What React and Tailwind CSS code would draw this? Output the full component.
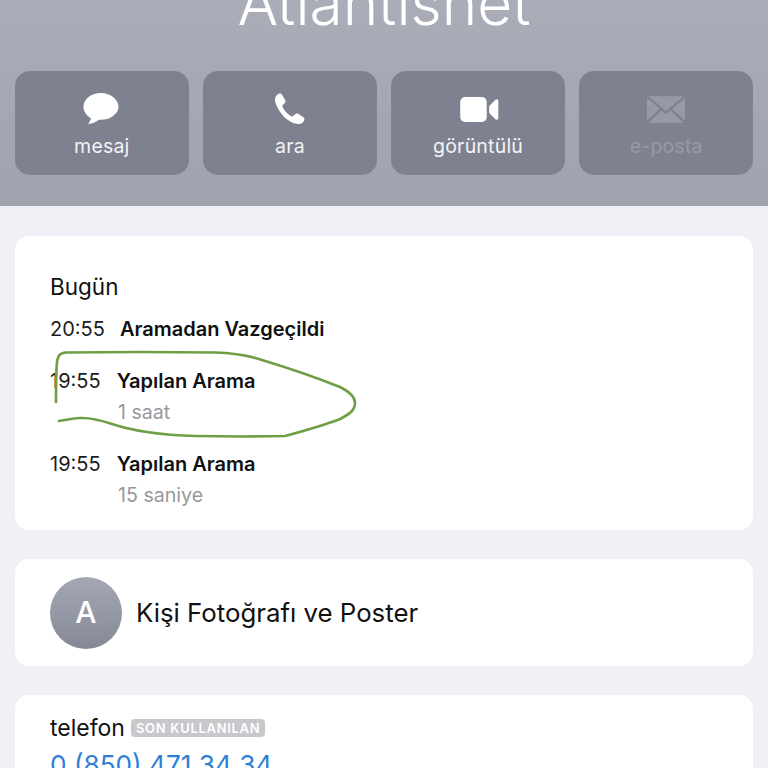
const font = "font-['Inter','Noto_Sans',sans-serif]";

function ActionButton({ icon, label, muted, iconClass }) {
    return (
        <div className="h-[104px] rounded-[15px] bg-[#7e8290] flex flex-col items-center">
            <div className={`h-[34px] w-[40px] mt-[21px] flex items-center justify-center ${iconClass || ""}`}>{icon}</div>
            <span className={`mt-[8px] text-[19.5px] leading-[24px] tracking-[0.2px] ${muted ? "text-[#979aa6]" : "text-[#f3f3f5]"}`}>
                {label}
            </span>
        </div>
    );
}

function CallRow({ time, title, detail, titleGap }) {
    return (
        <div className="flex flex-col">
            <div className="flex items-baseline text-[20px] leading-[24px]">
                <span className="text-[#1c1c1e]">{time}</span>
                <span className={`font-semibold text-[#111] ${titleGap}`}>{title}</span>
            </div>
            {detail && <div className="ml-[68px] mt-[7px] text-[19.6px] leading-[24px] text-[#98989d]">{detail}</div>}
        </div>
    );
}

export default function App() {
    return (
        <div className={`h-[768px] overflow-hidden relative bg-[#f0f0f6] ${font}`}>
            <div className="h-[206px] overflow-hidden bg-gradient-to-b from-[#aaadb7] to-[#a0a3ae]">
                <div className="h-[71px] overflow-hidden flex justify-center">
                    <h1 className="-mt-[29px] h-[64px] text-[60.5px] leading-[64px] font-light text-white">Atlantisnet</h1>
                </div>
                <div className="px-[15px] grid grid-cols-4 gap-[14.5px]">
                    <ActionButton
                        label="mesaj"
                        iconClass="-translate-x-[1px]"
                        icon={
                            <svg width="38" height="34" viewBox="0 0 38 34" fill="#fff">
                                <path d="M19 1C9.2 1 1.5 7.1 1.5 14.8c0 4.8 3 9 7.5 11.4-.3 2-1.700 4.300-3 5.800 3.800-.2 8.200-2 11-4.300.7.1 1.300.1 2 .1 9.800 0 17.500-6.200 17.500-13S28.800 1 19 1Z" />
                            </svg>
                        }
                    />
                    <ActionButton
                        label="ara"
                        iconClass="-translate-x-[1px]"
                        icon={
                            <svg width="32" height="34" viewBox="0 0 32 34" fill="#fff">
                                <path d="M4.500 2.500C6 1.300 8 1.200 9 2.800l3 5c.8 1.300.5 2.700-.6 3.700l-1.700 1.500c-.5.500-.5 1.100-.2 1.800 1.900 4 5 7.400 8.800 9.400.7.400 1.300.3 1.800-.2l1.700-1.600c1.100-1 2.500-1.200 3.700-.4l4.700 3.100c1.500 1 1.600 2.900.4 4.300-1.500 1.800-3.500 2.900-5.800 2.700-6.300-.6-12.500-5-16.500-10.500C4.600 16.400 1.700 11 2 7c.1-1.800 1.200-3.300 2.500-4.500Z" />
                            </svg>
                        }
                    />
                    <ActionButton
                        label="görüntülü"
                        iconClass="translate-x-[1px]"
                        icon={
                            <svg width="39" height="27" viewBox="0 0 40 28" fill="#fff">
                                <rect x="0" y="1" width="27.500" height="26" rx="5" />
                                <path d="M30 10.500 36.500 4c1.300-1.200 3-.5 3 1.200v17.600c0 1.700-1.700 2.400-3 1.200L30 17.500Z" />
                            </svg>
                        }
                    />
                    <ActionButton
                        label="e-posta"
                        muted
                        icon={
                            <svg width="38" height="27" viewBox="0 0 40 28" fill="#979aa6">
                                <path d="M1.500 0h37L20 15.500Z" />
                                <path d="M0 2v23.500L13.500 13.200Z" />
                                <path d="M40 2v23.500L26.500 13.200Z" />
                                <path d="M1.500 28h37L25 15l-5 4-5-4Z" />
                            </svg>
                        }
                    />
                </div>
            </div>

            <div className="px-[15px] pt-[30px] flex flex-col gap-[29px]">
                <section className="h-[294px] rounded-[14px] bg-white pl-[35px] pt-[37px]">
                    <div className="text-[22.5px] leading-[28px] text-[#111]">Bugün</div>
                    <div className="mt-[16px] flex flex-col gap-[28px]">
                        <CallRow time="20:55" title="Aramadan Vazgeçildi" titleGap="ml-[15px]" />
                        <CallRow time="19:55" title="Yapılan Arama" detail="1 saat" titleGap="ml-[16px]" />
                        <CallRow time="19:55" title="Yapılan Arama" detail="15 saniye" titleGap="ml-[16px]" />
                    </div>
                </section>

                <section className="h-[107px] rounded-[14px] bg-white pl-[35px] flex items-center">
                    <div className="w-[72px] h-[72px] rounded-full bg-gradient-to-b from-[#a4a7b4] to-[#858995] flex items-center justify-center text-white text-[30px] font-medium">
                        A
                    </div>
                    <span className="ml-[14px] mt-[1px] text-[25.8px] text-[#111]">Kişi Fotoğrafı ve Poster</span>
                </section>

                <section className="h-[120px] rounded-[14px] bg-white pl-[35px] pt-[18px]">
                    <div className="flex items-center">
                        <span className="text-[23px] leading-[30px] text-[#111]">telefon</span>
                        <span className="ml-[6px] h-[18px] px-[5px] rounded-[4px] bg-[#c7c7cc] text-white text-[13px] leading-[18px] font-semibold tracking-[0.7px]">
                            SON KULLANILAN
                        </span>
                    </div>
                    <div className="mt-[6px] text-[26.2px] leading-[32px] text-[#2f7fd6]">0 (850) 471 34 34</div>
                </section>
            </div>

            {/* el ile cizilmis yesil isaret */}
            <svg className="absolute left-0 top-0 pointer-events-none" width="768" height="768" fill="none">
                <path
                    d="M56 402C56 385 56 372 57 362C58 355 60 353 66 352.500C100 352 180 352 215 352.500C235 353 250 356 262 360C285 367 320 379 340 387C350 392 355 397 355 403C355 410 350 414 340 419C322 426 300 432 285 436C260 436.500 220 436.500 195 436C160 435 130 430 112 424C100 420 90 417.500 80 418C72 418.500 65 420 59 421"
                    stroke="#6f9f45"
                    strokeWidth="2.6"
                    strokeLinecap="round"
                />
            </svg>
        </div>
    );
}
